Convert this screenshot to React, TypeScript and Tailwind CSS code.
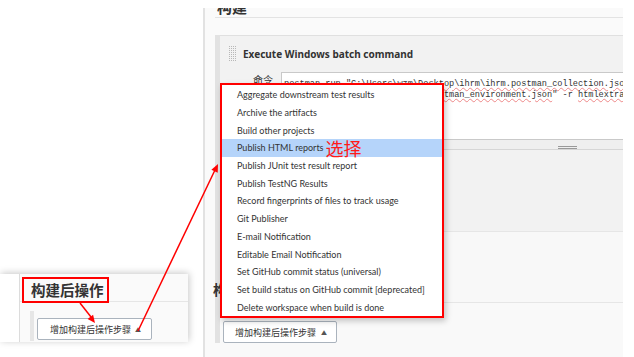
import React from "react";

const items = [
  "Aggregate downstream test results",
  "Archive the artifacts",
  "Build other projects",
  "Publish HTML reports",
  "Publish JUnit test result report",
  "Publish TestNG Results",
  "Record fingerprints of files to track usage",
  "Git Publisher",
  "E-mail Notification",
  "Editable Email Notification",
  "Set GitHub commit status (universal)",
  "Set build status on GitHub commit [deprecated]",
  "Delete workspace when build is done",
];

const sans = { fontFamily: 'Lato, "Noto Sans", "Noto Sans CJK SC", sans-serif' };
const noto = { fontFamily: '"Noto Sans", "Noto Sans CJK SC", sans-serif' };
const cjk = { fontFamily: '"Noto Sans CJK SC", "Noto Sans", sans-serif' };
const mono = { fontFamily: '"Liberation Mono", "DejaVu Sans Mono", monospace' };

function Handle() {
  const dots = [];
  for (let c = 0; c < 4; c++)
    for (let r = 0; r < 8; r++)
      dots.push(<rect key={`${c}-${r}`} x={c * 2} y={r * 2} width={1} height={1} fill="#b8b8b8" />);
  return (
    <svg width="7" height="15" viewBox="0 0 7 15" className="shrink-0">
      {dots}
    </svg>
  );
}

const sp = "underline decoration-wavy decoration-[#e88] underline-offset-[1px]";

export default function App() {
  return (
    <div className="relative w-[634px] h-[357px] overflow-hidden bg-white flex" style={sans}>
      {/* left inset */}
      <div className="w-[203px] shrink-0 pt-[274px]">
        <div className="w-[188px] h-[68px] bg-[#fafafa] shadow-[1px_-1px_7px_rgba(0,0,0,0.22)] flex">
          <div className="w-[20px] bg-white border-r border-[#dcdcdc]" />
          <div className="flex-1 flex flex-col">
            <div className="h-[28px] border-b border-[#e6e6e6] pl-[2px] pt-[3px]">
              <div className="w-[87px] h-[26px] border-2 border-[#ff0000] pl-[7px] flex items-center">
                <span className="text-[14.5px] leading-none font-bold text-[#333]" style={cjk}>构建后操作</span>
              </div>
            </div>
            <div className="pt-[9px] pl-[10px] flex">
              <div className="w-[4px] h-[30px] bg-[#e6e6e6]" />
              <div className="ml-[3px] mt-[7px] w-[115px] h-[22px] bg-white border border-[#aab3bd] rounded-[2px] flex items-center pl-[12px] text-[#333]">
                <span className="text-[9px] leading-none" style={cjk}>增加构建后操作步骤</span>
                <span className="ml-[4px] text-[6px] text-[#555]">▲</span>
              </div>
            </div>
          </div>
        </div>
      </div>

      {/* main screenshot */}
      <div className="w-[420px] shrink-0 mt-[8px] border-l-2 border-[#e2e2e2] bg-[#fafafa] pl-[10px] flex flex-col overflow-hidden">
        <div className="h-[10px] shrink-0 border-b border-[#e3e3e3] pl-[2px] overflow-hidden">
          <div className="-mt-[9px] text-[15px] leading-[15px] font-bold text-[#333]" style={cjk}>构建</div>
        </div>
        <div className="mt-[17px] flex flex-1">
          <div className="w-[5px] h-[308px] bg-[#e2e2e2] shrink-0" />
          <div className="flex-1 flex flex-col min-w-0">
            {/* panel */}
            <div className="h-[196px] bg-[#f2f2f2] border-t border-[#e0e0e0] flex flex-col">
              <div className="mt-[10px] pl-[9px] h-[15px] flex items-center">
                <Handle />
                <span className="ml-[7px] text-[10px] font-bold text-[#333] leading-none" style={noto}>Execute Windows batch command</span>
              </div>
              <div className="mt-[11px] flex">
                <span className="pl-[33px] pt-[3px] w-[61px] text-[10px] leading-none text-[#333]" style={cjk}>命令</span>
                <div className="flex-1 h-[68px] bg-white border-y border-l border-[#c9c9c9] pl-[2px] pt-[6px] overflow-hidden">
                  <div className="text-[8.6px] leading-[11px] text-[#333] whitespace-pre" style={mono}>
                    <div>
                      {'postman run "C:\\Users\\wzm\\Deskt'}
                      <span className={sp}>{"op\\ihrm\\ihrm.postman_collection.json"}</span>
                      {'" -e'}
                    </div>
                    <div>
                      {'-e "C:\\Users\\wzm\\Desktop\\ih.pos'}
                      <span className={sp}>{"tman_environment.json"}</span>
                      {'" -r '}
                      <span className={sp}>htmlextra</span>
                    </div>
                  </div>
                </div>
              </div>
              <div className="ml-[61px] h-[10px] border-b border-[#d6d6d6] bg-[#efefef] pl-[277px] pt-[6px]">
                <div className="w-[19px] h-[3px] border-y border-[#9a9a9a]" />
              </div>
            </div>
            {/* lighter region with heading */}
            <div className="h-[71px] bg-[#f8f8f8] border-t border-[#e6e6e6]">
              <div className="mt-[50px] -ml-[7px] text-[14px] leading-[14px] font-bold text-[#333]" style={cjk}>构建后操作</div>
            </div>
            <div className="flex-1 bg-[#f9f9f9] border-t border-[#e6e6e6]">
              <div className="mt-[18px] ml-[3px] w-[114px] h-[22px] bg-white border border-[#aab3bd] rounded-[2px] flex items-center pl-[11px] text-[#333]">
                <span className="text-[9px] leading-none" style={cjk}>增加构建后操作步骤</span>
                <span className="ml-[5px] text-[6px] text-[#555]">▲</span>
              </div>
            </div>
          </div>
        </div>
      </div>
      <div className="flex-1 bg-white" />

      {/* dropdown */}
      <div className="absolute left-[220px] top-[83px] w-[224px] h-[235px] border-2 border-[#ff0000] bg-white shadow-[2px_3px_6px_rgba(0,0,0,0.22)] flex flex-col pt-[1px] overflow-hidden">
        {items.map((t, i) => (
          <div
            key={t}
            className={`h-[17.7px] shrink-0 pl-[15px] flex items-center text-[9px] leading-none text-[#333] ${i === 3 ? "bg-[#b5d4fa]" : ""}`}
          >
            <span>{t}</span>
            {i === 3 && (
              <span className="ml-[2px] text-[18px] leading-none text-[#ff1a1a]" style={cjk}>选择</span>
            )}
          </div>
        ))}
      </div>

      {/* arrows */}
      <svg className="absolute inset-0 pointer-events-none" width="634" height="357" viewBox="0 0 634 357">
        <line x1="138" y1="331" x2="215" y2="170" stroke="#ff0000" strokeWidth="1.5" />
        <polygon points="218,164 217.7,172.7 211.4,169.7" fill="#ff0000" />
        <line x1="80" y1="303" x2="91" y2="317" stroke="#ff0000" strokeWidth="1.5" />
        <polygon points="95,323 87.6,319.1 93.1,314.8" fill="#ff0000" />
      </svg>
    </div>
  );
}
